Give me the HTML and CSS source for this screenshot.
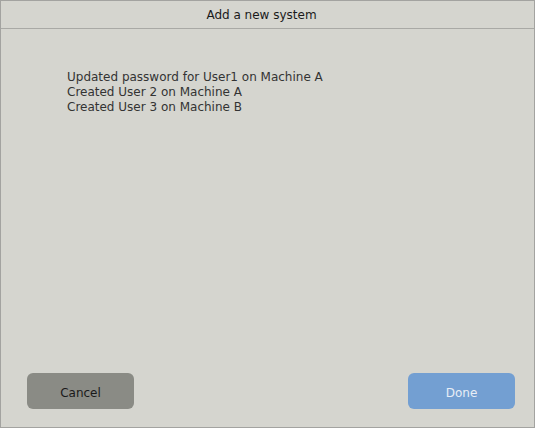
FILE: index.html
```html
<!DOCTYPE html>
<html>
<head>
<meta charset="utf-8">
<link rel="stylesheet" href="styles.css">
</head>
<body>
<div class="window">
  <div class="header">Add a new system</div>
  <div class="content">
    <div class="log">
      <div>Updated password for User1 on Machine A</div>
      <div>Created User 2 on Machine A</div>
      <div>Created User 3 on Machine B</div>
    </div>
  </div>
  <div class="footer">
    <button class="btn cancel">Cancel</button>
    <button class="btn done">Done</button>
  </div>
</div>
</body>
</html>
```
FILE: styles.css
```css
html, body {
  margin: 0;
  padding: 0;
}
body {
  width: 535px;
  height: 428px;
  font-family: "DejaVu Sans", sans-serif;
  color: #2a2a2a;
}
.window {
  box-sizing: border-box;
  width: 535px;
  height: 428px;
  background: #d5d5cf;
  border: 1px solid #a3a3a0;
  display: flex;
  flex-direction: column;
}
.header {
  height: 27px;
  border-bottom: 1px solid #a9a9a5;
  display: flex;
  align-items: center;
  justify-content: center;
  font-size: 12px;
  color: #1a1a1a;
  padding-right: 12px;
}
.content {
  flex: 1;
  padding: 41px 0 0 66px;
}
.log {
  font-size: 12px;
  line-height: 15px;
  color: #333;
}
.footer {
  display: flex;
  justify-content: space-between;
  padding: 0 19px 18px 26px;
}
.btn {
  width: 107px;
  height: 36px;
  border: none;
  border-radius: 6px;
  padding: 3px 0 0;
  font-family: "DejaVu Sans", sans-serif;
  font-size: 12px;
}
.cancel {
  background: #8a8b85;
  color: #1a1a1a;
}
.done {
  background: #739fd2;
  color: #e8eef6;
}
```
